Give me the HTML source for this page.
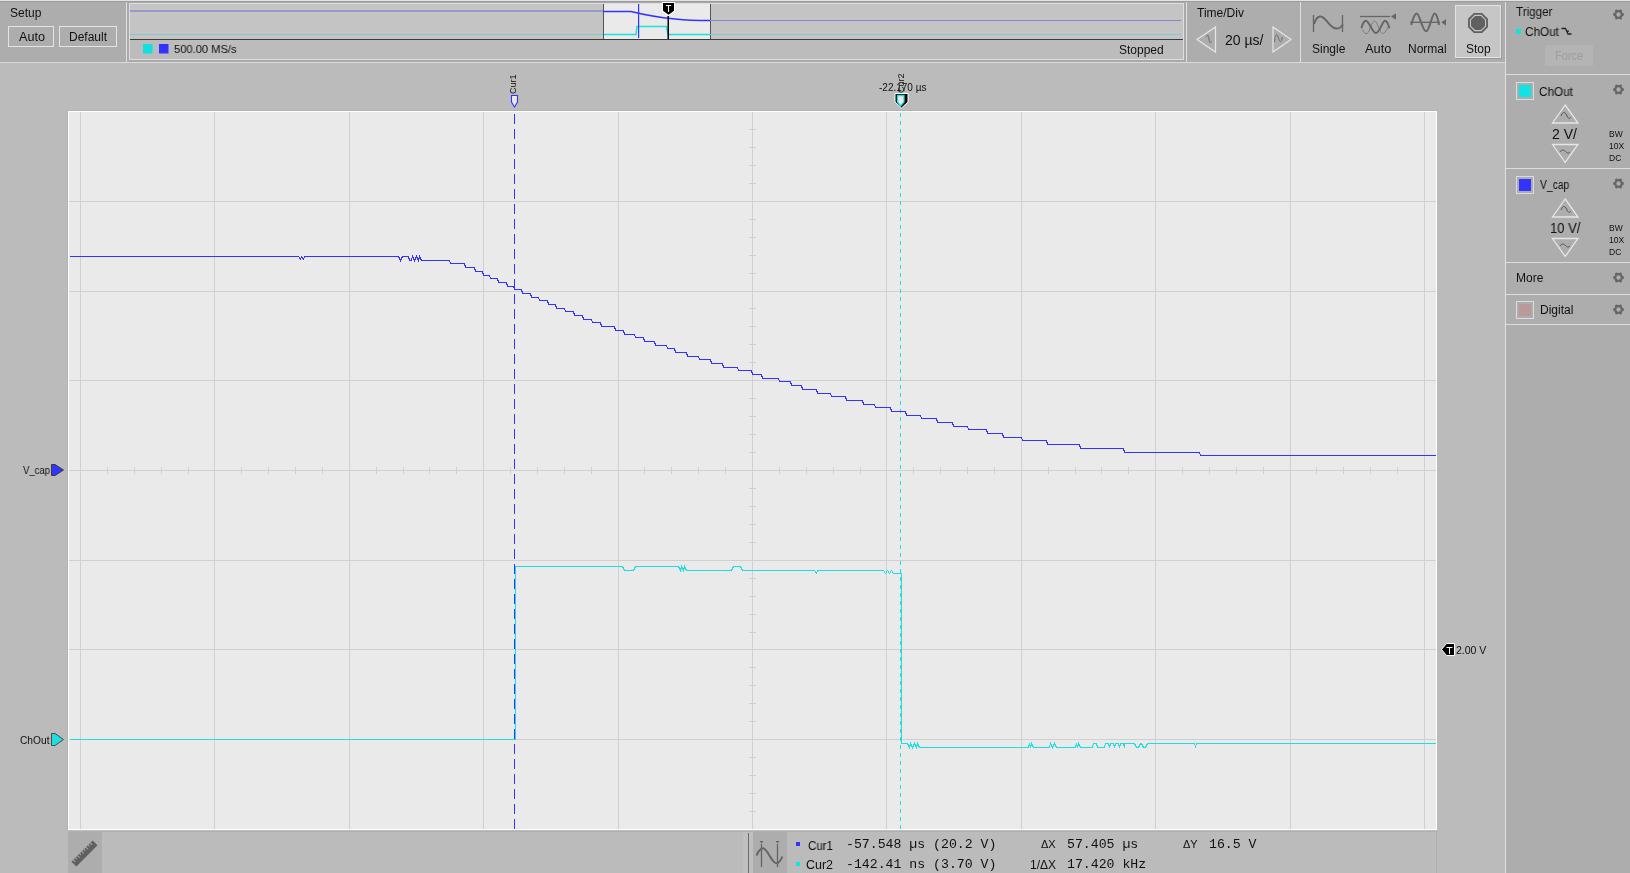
<!DOCTYPE html><html><head><meta charset="utf-8"><title>Scope</title><style>
*{margin:0;padding:0;box-sizing:border-box}
html,body{width:1630px;height:873px;overflow:hidden;background:#bbbbbb;font-family:"Liberation Sans",sans-serif;color:#111}
.t{position:absolute;white-space:nowrap;line-height:1;will-change:transform}
.btn{position:absolute;border:1px solid #e4e4e4;background:#adadad}
.mono{font-family:"Liberation Mono",monospace}
</style></head><body>
<div style="position:absolute;left:1506px;top:63px;width:124px;height:810px;background:#adadad"></div>
<svg width="1630" height="873" style="position:absolute;left:0;top:0">
<g shape-rendering="crispEdges">
<rect x="0" y="0" width="1630" height="63" fill="#adadad"/>
<rect x="0" y="0" width="1630" height="1" fill="#e2e2e2"/>
<rect x="0" y="1" width="1630" height="1" fill="#9c9c9c"/>
<rect x="0" y="62" width="1505" height="1" fill="#dadada"/>
<rect x="126" y="2" width="1" height="60" fill="#e0e0e0"/>
<rect x="127" y="2" width="1059" height="60" fill="#a9a9a9"/>
<rect x="129" y="3" width="1055" height="57" fill="#dedede"/>
<rect x="130" y="4" width="1053" height="35" fill="#c4c4c4"/>
<rect x="130" y="40" width="1053" height="19" fill="#bcbcbc"/>
<rect x="130" y="39" width="1053" height="1" fill="#3a3a3a"/>
<rect x="1186" y="2" width="1" height="60" fill="#e0e0e0"/>
<rect x="1300" y="2" width="1" height="60" fill="#e0e0e0"/>
<rect x="1505" y="2" width="1" height="871" fill="#e0e0e0"/>
<rect x="603" y="4" width="108" height="35" fill="#555"/>
<rect x="604" y="4" width="106" height="35" fill="#eaeaea"/>
</g>
<g fill="none" stroke-width="1.2">
<path d="M130 11H603" stroke="#8a8acc" stroke-width="1.5"/>
<path d="M710 20.5H1181" stroke="#8484cc"/>
<path d="M130 34.5H603" stroke="#7ec9c9"/>
<path d="M710 34.5H1181" stroke="#7ec9c9"/>
<path d="M604 11.5H631C645 15 660 17.5 675 19S695 20.5 710 20.5" stroke="#3333ff" stroke-width="1.5"/>
<path d="M604 34.5H636L637 26.5H666.5L668 34.5H710" stroke="#1ddfdf" stroke-width="1.5"/>
</g>
<rect x="638" y="4" width="1.2" height="34" fill="#3333ff"/>
<rect x="667.5" y="16" width="1.5" height="23" fill="#000"/>
<path d="M662 2H675V11.2L668.5 16L662 11.2Z" fill="#fff"/>
<path d="M663 3H674V10.8L668.5 14.8L663 10.8Z" fill="#000"/>
<path d="M666 5.5H671.2M668.5 5.5V12" stroke="#fff" stroke-width="1.1" fill="none"/>
<rect x="143" y="44" width="9.5" height="9.5" fill="#11e0e0"/>
<rect x="159" y="44" width="9.5" height="9.5" fill="#3333ff"/>
</svg>
<svg width="1630" height="873" style="position:absolute;left:0;top:0">
<g shape-rendering="crispEdges">
<rect x="67" y="110" width="1371" height="1" fill="#b3b3b3"/>
<rect x="67" y="110" width="1" height="720" fill="#b3b3b3"/>
<rect x="68" y="111" width="1369" height="719" fill="#ffffff"/>
<rect x="69" y="112" width="1367" height="717" fill="#eaeaea"/>
<path d="M80.5 112V829 M214.5 112V829 M349.5 112V829 M483.5 112V829 M618.5 112V829 M752.5 112V829 M886.5 112V829 M1021.5 112V829 M1155.5 112V829 M1290.5 112V829 M1424.5 112V829 M69 201.5H1436 M69 291.5H1436 M69 380.5H1436 M69 470.5H1436 M69 560.5H1436 M69 649.5H1436 M69 739.5H1436 M107.5 467V474 M134.5 467V474 M161.5 467V474 M188.5 467V474 M241.5 467V474 M268.5 467V474 M295.5 467V474 M322.5 467V474 M376.5 467V474 M403.5 467V474 M429.5 467V474 M456.5 467V474 M510.5 467V474 M537.5 467V474 M564.5 467V474 M591.5 467V474 M644.5 467V474 M671.5 467V474 M698.5 467V474 M725.5 467V474 M779.5 467V474 M806.5 467V474 M833.5 467V474 M860.5 467V474 M913.5 467V474 M940.5 467V474 M967.5 467V474 M994.5 467V474 M1048.5 467V474 M1075.5 467V474 M1101.5 467V474 M1128.5 467V474 M1182.5 467V474 M1209.5 467V474 M1236.5 467V474 M1263.5 467V474 M1316.5 467V474 M1343.5 467V474 M1370.5 467V474 M1397.5 467V474 M749 129.5H756 M749 147.5H756 M749 165.5H756 M749 183.5H756 M749 219.5H756 M749 237.5H756 M749 255.5H756 M749 273.5H756 M749 308.5H756 M749 326.5H756 M749 344.5H756 M749 362.5H756 M749 398.5H756 M749 416.5H756 M749 434.5H756 M749 452.5H756 M749 488.5H756 M749 506.5H756 M749 524.5H756 M749 542.5H756 M749 578.5H756 M749 596.5H756 M749 614.5H756 M749 632.5H756 M749 667.5H756 M749 685.5H756 M749 703.5H756 M749 721.5H756 M749 757.5H756 M749 775.5H756 M749 793.5H756 M749 811.5H756" stroke="#d0d0d0" stroke-width="1" fill="none"/>
<rect x="68" y="831" width="1369" height="1" fill="#b0b0b0"/>
<rect x="1436" y="832" width="1" height="41" fill="#b0b0b0"/>
<rect x="68" y="832" width="34" height="41" fill="#adadad"/>
<rect x="743" y="832" width="10" height="41" fill="#c0c0c0"/>
<rect x="748" y="833" width="1" height="40" fill="#6a6a6a"/>
<rect x="753" y="832" width="34" height="41" fill="#adadad"/>
<path d="M514.5 114V829" stroke="#3333ff" stroke-width="1" stroke-dasharray="10 5"/>
<path d="M900.5 113V829" stroke="#1ddfdf" stroke-width="1" stroke-dasharray="4 4"/>
</g>
<g shape-rendering="crispEdges" fill="none" stroke-width="1">
<path d="M69.5 256.5 L298.5 256.5 L300.5 259.5 L301.5 256.5 L303.5 259.5 L304.5 256.5 L398.5 256.5 L400.5 260.5 L402.5 256.5 L408.5 256.5 L409.5 260.5 L411.5 260.5 L412.5 256.5 L414.5 260.5 L416.5 256.5 L418.5 260.5 L419.5 256.5 L421.5 260.5 L423.5 260.5 L449.5 260.5 L450.5 263.5 L464.5 263.5 L465.5 267.5 L474.5 267.5 L475.5 271.5 L482.5 271.5 L483.5 275.5 L489.5 275.5 L490.5 278.5 L497.5 278.5 L498.5 282.5 L506.5 282.5 L507.5 286.5 L513.5 286.5 L514.5 289.5 L521.5 289.5 L522.5 293.5 L530.5 293.5 L531.5 297.5 L538.5 297.5 L539.5 300.5 L547.5 300.5 L548.5 304.5 L555.5 304.5 L556.5 308.5 L564.5 308.5 L565.5 311.5 L573.5 311.5 L574.5 315.5 L582.5 315.5 L583.5 319.5 L591.5 319.5 L592.5 322.5 L600.5 322.5 L601.5 326.5 L614.5 326.5 L615.5 330.5 L623.5 330.5 L624.5 334.5 L634.5 334.5 L635.5 337.5 L643.5 337.5 L644.5 341.5 L654.5 341.5 L655.5 345.5 L666.5 345.5 L667.5 348.5 L674.5 348.5 L675.5 352.5 L686.5 352.5 L687.5 356.5 L698.5 356.5 L699.5 359.5 L710.5 359.5 L711.5 363.5 L722.5 363.5 L723.5 367.5 L737.5 367.5 L738.5 370.5 L751.5 370.5 L752.5 374.5 L761.5 374.5 L762.5 378.5 L778.5 378.5 L779.5 381.5 L790.5 381.5 L791.5 385.5 L801.5 385.5 L802.5 389.5 L816.5 389.5 L817.5 393.5 L830.5 393.5 L831.5 396.5 L845.5 396.5 L846.5 400.5 L862.5 400.5 L863.5 404.5 L874.5 404.5 L875.5 407.5 L890.5 407.5 L891.5 411.5 L905.5 411.5 L906.5 415.5 L920.5 415.5 L921.5 418.5 L936.5 418.5 L937.5 422.5 L952.5 422.5 L953.5 426.5 L967.5 426.5 L968.5 429.5 L986.5 429.5 L987.5 433.5 L1002.5 433.5 L1003.5 437.5 L1021.5 437.5 L1022.5 440.5 L1046.5 440.5 L1047.5 444.5 L1079.5 444.5 L1080.5 448.5 L1123.5 448.5 L1124.5 452.5 L1199.5 452.5 L1200.5 455.5 L1435.5 455.5" stroke="#3333ff"/>
<path d="M69.5 739.5 L515.5 739.5 L515.5 566.5 L622.5 566.5 L624.5 570.5 L633.5 570.5 L635.5 566.5 L678.5 566.5 L680.5 570.5 L681.5 566.5 L683.5 570.5 L684.5 566.5 L686.5 570.5 L731.5 570.5 L733.5 566.5 L740.5 566.5 L742.5 570.5 L814.5 570.5 L816.5 573.5 L817.5 570.5 L883.5 570.5 L885.5 573.5 L887.5 570.5 L889.5 573.5 L891.5 570.5 L893.5 573.5 L899.5 573.5 L901.5 573.5 L901.5 743.5 L907.5 743.5 L909.5 747.5 L910.5 743.5 L912.5 747.5 L914.5 743.5 L916.5 747.5 L917.5 743.5 L919.5 747.5 L1028.5 747.5 L1029.5 743.5 L1030.5 747.5 L1031.5 743.5 L1033.5 747.5 L1049.5 747.5 L1050.5 743.5 L1052.5 747.5 L1054.5 743.5 L1056.5 747.5 L1075.5 747.5 L1076.5 743.5 L1077.5 747.5 L1078.5 743.5 L1080.5 747.5 L1092.5 747.5 L1093.5 743.5 L1096.5 743.5 L1097.5 747.5 L1104.5 747.5 L1105.5 743.5 L1108.5 743.5 L1109.5 747.5 L1109.5 747.5 L1110.5 743.5 L1113.5 743.5 L1114.5 747.5 L1114.5 747.5 L1115.5 743.5 L1118.5 743.5 L1119.5 747.5 L1119.5 747.5 L1120.5 743.5 L1123.5 743.5 L1124.5 747.5 L1124.5 743.5 L1134.5 743.5 L1136.5 747.5 L1138.5 747.5 L1140.5 743.5 L1141.5 743.5 L1143.5 747.5 L1145.5 747.5 L1147.5 743.5 L1194.5 743.5 L1195.5 746.5 L1196.5 743.5 L1435.5 743.5" stroke="#1ddfdf"/>
</g>
<path d="M51.5 464.5H55L63.5 470L55 475.5H51.5Z" fill="#3333ff" stroke="#3a3a3a" stroke-width="1"/>
<path d="M51.5 733.5H55L63.5 739.5L55 745.5H51.5Z" fill="#1ddfdf" stroke="#4a4a4a" stroke-width="1"/>
<path d="M511.5 95.5H517.5V102L514.5 107L511.5 102Z" fill="#eaeaea" stroke="#3333ff" stroke-width="1.1"/>
<path d="M895 93.5H908V102L901.5 108L895 102Z" fill="#000" stroke="#fff" stroke-width="1"/>
<path d="M897.5 95.5H904V102L900.5 106L897.5 102Z" fill="#eaeaea" stroke="#1ddfdf" stroke-width="1.3"/>
<path d="M1441.5 649.5L1446.5 643.5H1454.5V655.5H1446.5Z" fill="#000" stroke="#fff" stroke-width="1"/>
</svg>
<svg width="1630" height="873" style="position:absolute;left:0;top:0">
<g shape-rendering="crispEdges">
<rect x="1506" y="74" width="124" height="1" fill="#dcdcdc"/>
<rect x="1506" y="168" width="124" height="1" fill="#dcdcdc"/>
<rect x="1506" y="262" width="124" height="1" fill="#dcdcdc"/>
<rect x="1506" y="294" width="124" height="1" fill="#dcdcdc"/>
<rect x="1506" y="324" width="124" height="1" fill="#dcdcdc"/>
<rect x="1455" y="5" width="46" height="53" fill="#e2e2e2"/>
<rect x="1456" y="6" width="44" height="51" fill="#c6c6c6"/>
<rect x="1456" y="58" width="46" height="1" fill="#9a9a9a"/>
<rect x="1501" y="6" width="1" height="53" fill="#9f9f9f"/>
<rect x="1545" y="45" width="48" height="21" fill="#b4b4b4"/>
<rect x="1516" y="82" width="18" height="18" fill="#dcdcdc"/>
<rect x="1517" y="83" width="16" height="16" fill="#adadad"/>
<rect x="1519" y="85" width="12" height="12" fill="#11e3e3"/>
<rect x="1516" y="176" width="18" height="18" fill="#dcdcdc"/>
<rect x="1517" y="177" width="16" height="16" fill="#adadad"/>
<rect x="1519" y="179" width="12" height="12" fill="#3333ff"/>
<rect x="1516" y="301" width="18" height="18" fill="#dcdcdc"/>
<rect x="1517" y="302" width="16" height="16" fill="#adadad"/>
<rect x="1519" y="304" width="12" height="12" fill="#b89a9a"/>
<rect x="1516" y="29" width="5" height="5" fill="#11e3e3"/>
<rect x="796" y="842" width="4" height="4" fill="#3333ff"/>
<rect x="796" y="862" width="4" height="4" fill="#11e3e3"/>
</g>
<circle cx="1618.5" cy="14.5" r="3.3" fill="none" stroke="#666" stroke-width="2.2"/><path d="M1621.70 14.50L1623.80 14.50 M1620.10 17.27L1621.15 19.09 M1616.90 17.27L1615.85 19.09 M1615.30 14.50L1613.20 14.50 M1616.90 11.73L1615.85 9.91 M1620.10 11.73L1621.15 9.91" stroke="#666" stroke-width="2.4" fill="none"/>
<circle cx="1618.5" cy="89.5" r="3.3" fill="none" stroke="#666" stroke-width="2.2"/><path d="M1621.70 89.50L1623.80 89.50 M1620.10 92.27L1621.15 94.09 M1616.90 92.27L1615.85 94.09 M1615.30 89.50L1613.20 89.50 M1616.90 86.73L1615.85 84.91 M1620.10 86.73L1621.15 84.91" stroke="#666" stroke-width="2.4" fill="none"/>
<circle cx="1618.5" cy="183.5" r="3.3" fill="none" stroke="#666" stroke-width="2.2"/><path d="M1621.70 183.50L1623.80 183.50 M1620.10 186.27L1621.15 188.09 M1616.90 186.27L1615.85 188.09 M1615.30 183.50L1613.20 183.50 M1616.90 180.73L1615.85 178.91 M1620.10 180.73L1621.15 178.91" stroke="#666" stroke-width="2.4" fill="none"/>
<circle cx="1618.5" cy="277.5" r="3.3" fill="none" stroke="#666" stroke-width="2.2"/><path d="M1621.70 277.50L1623.80 277.50 M1620.10 280.27L1621.15 282.09 M1616.90 280.27L1615.85 282.09 M1615.30 277.50L1613.20 277.50 M1616.90 274.73L1615.85 272.91 M1620.10 274.73L1621.15 272.91" stroke="#666" stroke-width="2.4" fill="none"/>
<circle cx="1618.5" cy="309.5" r="3.3" fill="none" stroke="#666" stroke-width="2.2"/><path d="M1621.70 309.50L1623.80 309.50 M1620.10 312.27L1621.15 314.09 M1616.90 312.27L1615.85 314.09 M1615.30 309.50L1613.20 309.50 M1616.90 306.73L1615.85 304.91 M1620.10 306.73L1621.15 304.91" stroke="#666" stroke-width="2.4" fill="none"/>
<path d="M1561.5 28.5H1565.5L1568 34H1571.5M1566 31.2H1569" stroke="#222" stroke-width="1.3" fill="none"/>
<path d="M1197 39.5L1215.5 27V52Z" fill="none" stroke="#e6e6e6" stroke-width="1.2"/>
<path d="M1273 27V52L1291 39.5Z" fill="none" stroke="#e6e6e6" stroke-width="1.2"/>
<path d="M1206.5 37C1207.5 34 1208.5 35 1209 39S1210.5 44 1211.5 41" stroke="#6a6a6a" stroke-width="1" fill="none"/>
<path d="M1274.5 42C1275.5 33 1277 33 1278.5 38S1281 43 1282.5 37" stroke="#6a6a6a" stroke-width="1" fill="none"/>
<path d="M1565.2 105L1578 123H1552.5Z" fill="none" stroke="#e6e6e6" stroke-width="1.3"/>
<path d="M1552.5 144.5H1578L1565.2 162.5Z" fill="none" stroke="#e6e6e6" stroke-width="1.3"/>
<path d="M1561 116C1563 111 1565 112 1566.5 115S1569 120 1571 117" stroke="#555" stroke-width="1" fill="none"/>
<path d="M1560 152C1562 149 1564 150 1565.5 151.5S1568 154 1570 152" stroke="#555" stroke-width="1" fill="none"/>
<path d="M1565.2 199L1578 217H1552.5Z" fill="none" stroke="#e6e6e6" stroke-width="1.3"/>
<path d="M1552.5 238.5H1578L1565.2 256.5Z" fill="none" stroke="#e6e6e6" stroke-width="1.3"/>
<path d="M1561 210C1563 205 1565 206 1566.5 209S1569 214 1571 211" stroke="#555" stroke-width="1" fill="none"/>
<path d="M1560 246C1562 243 1564 244 1565.5 245.5S1568 248 1570 246" stroke="#555" stroke-width="1" fill="none"/>
<path d="M1313.5 15V32M1342.5 15V32" stroke="#666" stroke-width="1.3" fill="none"/>
<path d="M1314 24C1316 18 1319 16 1321 16.5C1326 17.5 1330 28 1336 28.5C1340 29 1342 26 1343 24.5" stroke="#666" stroke-width="2" fill="none"/>
<path d="M1360 16.5H1390" stroke="#666" stroke-width="1.3" fill="none"/>
<path d="M1391 16.4L1396 13.3V19.7Z" fill="#666"/>
<path d="M1362.5 29.8C1364 33 1365.5 34 1367 33.5C1370 32 1371.5 21 1374.5 21C1377.5 21 1379.5 33.5 1382.6 33.5C1385 33.5 1387 29 1388 27" stroke="#777" stroke-width="0.9" fill="none"/>
<path d="M1361.4 28.3C1362.5 24 1364 20.8 1365.8 20.8C1369 20.8 1372.5 33.1 1376 33.1C1379.5 33.1 1382.5 20.8 1385 20.8C1387 20.8 1388.5 25 1389.4 28.3" stroke="#666" stroke-width="2" fill="none"/>
<path d="M1410 22.3H1440" stroke="#666" stroke-width="1.3" fill="none"/>
<path d="M1441.3 22.3L1446 19V25.7Z" fill="#666"/>
<path d="M1411.2 25C1413 18 1415 13.4 1416.8 13.4C1419.5 13.4 1422.5 31.3 1426 31.3C1429.5 31.3 1432 13.4 1434.6 13.4C1436.5 13.4 1438 19 1439 25" stroke="#666" stroke-width="2" fill="none"/>
<polygon points="1487.98,27.13 1482.13,32.98 1473.87,32.98 1468.02,27.13 1468.02,18.87 1473.87,13.02 1482.13,13.02 1487.98,18.87" fill="#606060"/>
<polygon points="1486.13,26.37 1481.37,31.13 1474.63,31.13 1469.87,26.37 1469.87,19.63 1474.63,14.87 1481.37,14.87 1486.13,19.63" fill="#c6c6c6"/>
<polygon points="1485.02,25.91 1480.91,30.02 1475.09,30.02 1470.98,25.91 1470.98,20.09 1475.09,15.98 1480.91,15.98 1485.02,20.09" fill="#606060"/>
<g transform="translate(84.5 853.5) rotate(-45)">
<rect x="-15" y="-3.5" width="30" height="7" fill="#606060"/>
<path d="M-12.5 -3.5V-0.5 M-9.5 -3.5V-1.5 M-6.5 -3.5V-0.5 M-3.5 -3.5V-1.5 M-0.5 -3.5V-0.5 M2.5 -3.5V-1.5 M5.5 -3.5V-0.5 M8.5 -3.5V-1.5 M11.5 -3.5V-0.5" stroke="#adadad" stroke-width="1" fill="none"/>
</g>
<path d="M761.5 844V867M777.5 844V867" stroke="#666" stroke-width="1.3" fill="none"/>
<path d="M759.5 841H763.5L761.5 843.5Z M775.5 841H779.5L777.5 843.5Z" fill="#666"/>
<path d="M756.5 855.5C758.5 851 760.5 848.3 763 848.3C767.5 848.3 771.5 863.2 776.3 863.2C779 863.2 781 860 782.3 856.5" stroke="#666" stroke-width="2" fill="none"/>
</svg>
<div class="t" style="left:10px;top:7px;font-size:12px;color:#111;">Setup</div>
<div class="btn" style="left:8px;top:26px;width:46px;height:21px"></div>
<div class="btn" style="left:59px;top:26px;width:58px;height:21px"></div>
<div class="t" style="left:18.5px;top:31px;font-size:12px;color:#111;transform:scaleX(1.05);transform-origin:0 0;">Auto</div>
<div class="t" style="left:68.5px;top:31px;font-size:12px;color:#111;">Default</div>
<div class="t" style="left:173.5px;top:44px;font-size:11.5px;color:#111;transform:scaleX(0.97);transform-origin:0 0;">500.00 MS/s</div>
<div class="t" style="left:1118.5px;top:44px;font-size:12px;color:#111;">Stopped</div>
<div class="t" style="left:1197px;top:7px;font-size:12px;color:#111;">Time/Div</div>
<div class="t" style="left:1224.5px;top:33px;font-size:14px;color:#111;">20 µs/</div>
<div class="t" style="left:1311.5px;top:43px;font-size:12px;color:#111;">Single</div>
<div class="t" style="left:1365px;top:43px;font-size:12px;color:#111;transform:scaleX(1.07);transform-origin:0 0;">Auto</div>
<div class="t" style="left:1407.5px;top:43px;font-size:12px;color:#111;">Normal</div>
<div class="t" style="left:1465.5px;top:43px;font-size:12px;color:#111;">Stop</div>
<div class="t" style="left:1516px;top:6px;font-size:12px;color:#111;transform:scaleX(0.97);transform-origin:0 0;">Trigger</div>
<div class="t" style="left:1555px;top:50px;font-size:12px;color:#9e9e9e;transform:scaleX(0.92);transform-origin:0 0;">Force</div>
<div class="t" style="left:1524.5px;top:26px;font-size:12px;color:#111;transform:scaleX(0.98);transform-origin:0 0;">ChOut</div>
<div class="t" style="left:1538.5px;top:86px;font-size:12px;color:#111;transform:scaleX(0.98);transform-origin:0 0;">ChOut</div>
<div class="t" style="left:1552px;top:127px;font-size:14px;color:#111;">2 V/</div>
<div class="t" style="left:1549.5px;top:221px;font-size:14px;color:#111;transform:scaleX(0.93);transform-origin:0 0;">10 V/</div>
<div class="t" style="left:1539.5px;top:179px;font-size:12px;color:#111;transform:scaleX(0.86);transform-origin:0 0;">V_cap</div>
<div class="t" style="left:1515.5px;top:272px;font-size:12px;color:#111;">More</div>
<div class="t" style="left:1539.5px;top:304px;font-size:12px;color:#111;">Digital</div>
<div class="t" style="left:1609px;top:130px;font-size:8.5px;color:#111;">BW</div>
<div class="t" style="left:1609px;top:142px;font-size:8.5px;color:#111;">10X</div>
<div class="t" style="left:1609px;top:154px;font-size:8.5px;color:#111;">DC</div>
<div class="t" style="left:1609px;top:224px;font-size:8.5px;color:#111;">BW</div>
<div class="t" style="left:1609px;top:236px;font-size:8.5px;color:#111;">10X</div>
<div class="t" style="left:1609px;top:248px;font-size:8.5px;color:#111;">DC</div>
<div class="t" style="left:23px;top:466px;font-size:10px;color:#111;transform:scaleX(0.95);transform-origin:0 0;">V_cap</div>
<div class="t" style="left:19.5px;top:736px;font-size:10px;color:#111;transform:scaleX(1.02);transform-origin:0 0;">ChOut</div>
<div class="t" style="left:1455.5px;top:646px;font-size:10px;color:#111;transform:scaleX(1.05);transform-origin:0 0;">2.00 V</div>
<div class="t" style="left:509.2px;top:93.5px;font-size:9px;transform:rotate(-90deg);transform-origin:0 0">Cur1</div>
<div class="t" style="left:896.5px;top:92.5px;font-size:9px;transform:rotate(-90deg);transform-origin:0 0">Cur2</div>
<div class="t" style="left:878.5px;top:83px;font-size:10px;color:#111;">-22.170 µs</div>
<svg width="1630" height="873" style="position:absolute;left:0;top:0"><path d="M1446.5 647.5H1452.5M1449.5 647.5V654" stroke="#fff" stroke-width="1" fill="none"/></svg>
<div class="t" style="left:807.5px;top:840px;font-size:12px;color:#111;transform:scaleX(0.96);transform-origin:0 0;">Cur1</div>
<div class="t" style="left:805.5px;top:859px;font-size:12px;color:#111;transform:scaleX(1.04);transform-origin:0 0;">Cur2</div>
<div class="t" style="left:846px;top:838px;font-size:13.2px;color:#111;font-family:'Liberation Mono',monospace">-57.548 µs (20.2 V)</div>
<div class="t" style="left:846px;top:858px;font-size:13.2px;color:#111;font-family:'Liberation Mono',monospace">-142.41 ns (3.70 V)</div>
<div class="t" style="left:1040.5px;top:839px;font-size:11px;color:#111;">ΔX</div>
<div class="t" style="left:1029.5px;top:859px;font-size:12px;color:#111;">1/ΔX</div>
<div class="t" style="left:1067px;top:838px;font-size:13.2px;color:#111;font-family:'Liberation Mono',monospace">57.405 µs</div>
<div class="t" style="left:1067px;top:858px;font-size:13.2px;color:#111;font-family:'Liberation Mono',monospace">17.420 kHz</div>
<div class="t" style="left:1182.5px;top:839px;font-size:11px;color:#111;">ΔY</div>
<div class="t" style="left:1209px;top:838px;font-size:13.2px;color:#111;font-family:'Liberation Mono',monospace">16.5 V</div>
</body></html>
